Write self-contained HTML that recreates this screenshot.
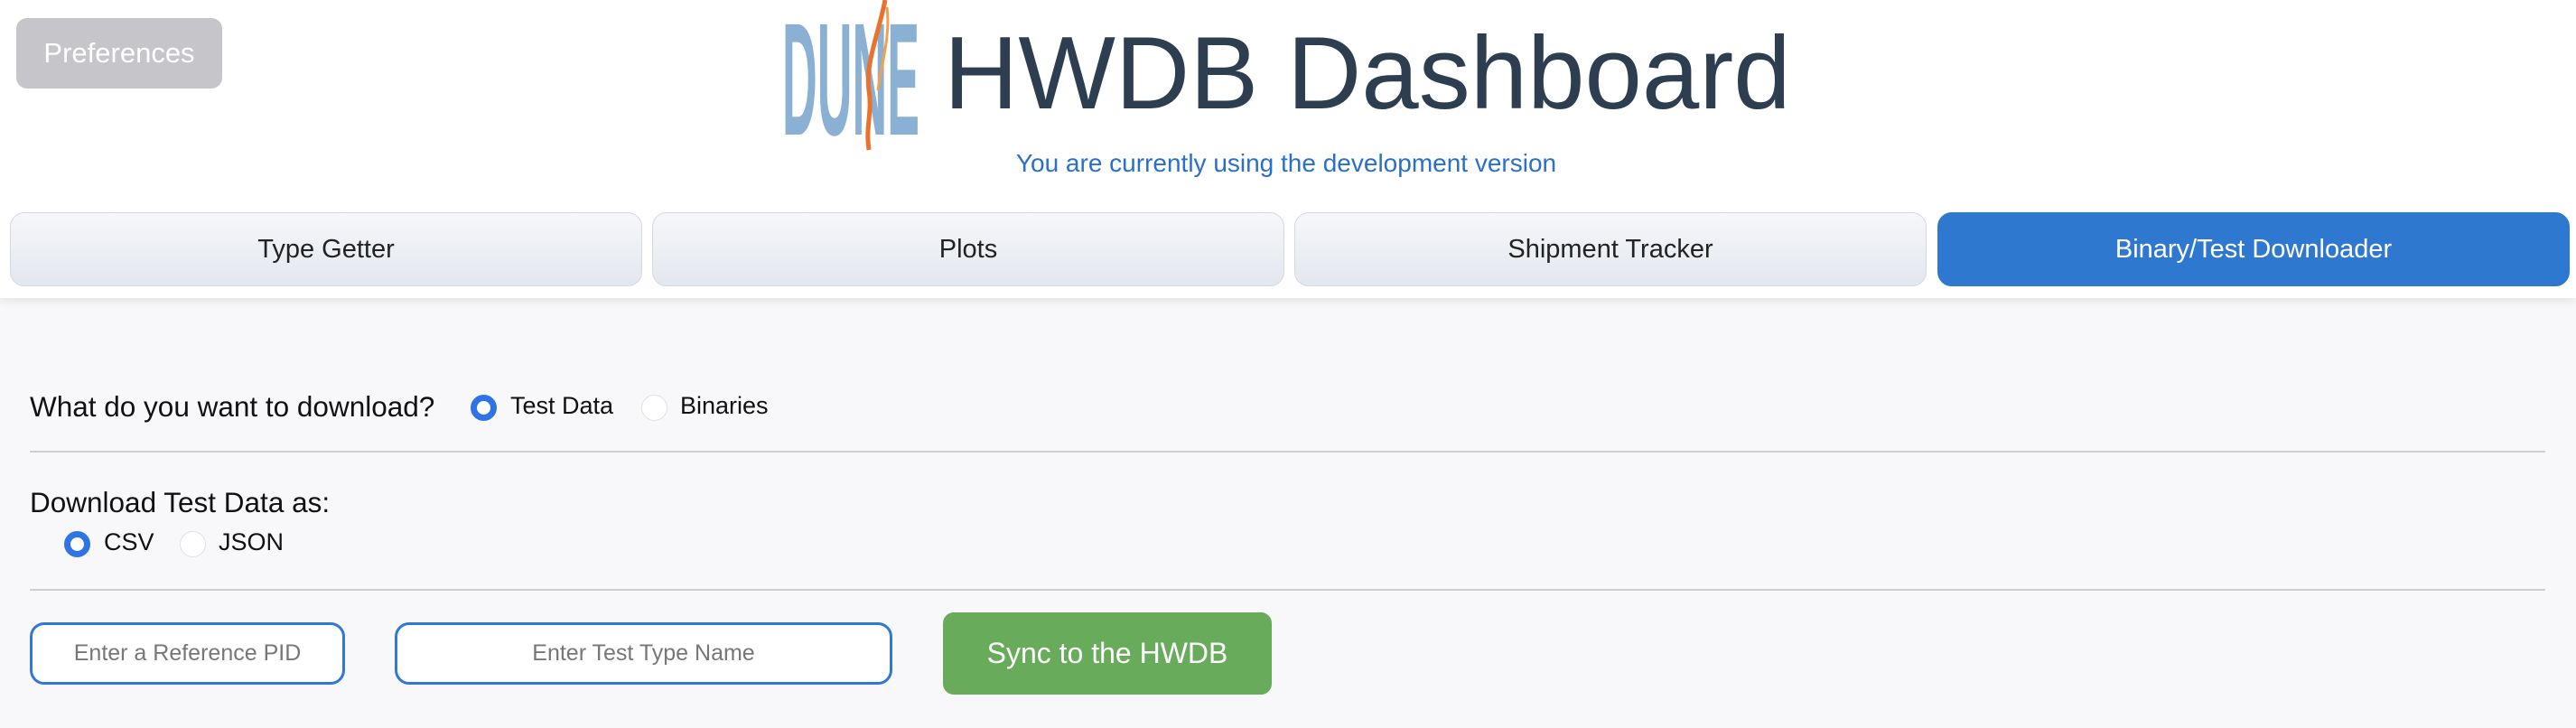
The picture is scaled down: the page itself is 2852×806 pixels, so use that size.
<!DOCTYPE html>
<html><head><meta charset="utf-8"><style>
*{box-sizing:border-box;margin:0;padding:0}
body{width:2852px;height:806px;overflow:hidden;background:#f8f8fa;font-family:"Liberation Sans",Arial,sans-serif;position:relative}
.hdr{position:absolute;left:0;top:0;width:2852px;height:330px;background:#fff;box-shadow:0 4px 10px rgba(0,0,0,0.08)}
.pref{position:absolute;left:18px;top:20px;width:228px;height:78px;background:#c6c5ca;border-radius:12px;color:#fff;font-size:31px;line-height:78px;text-align:center}
.title{position:absolute;left:1045px;top:12px;font-size:114px;color:#2c3e50;line-height:140px;white-space:nowrap}
.sub{position:absolute;left:0;width:2848px;top:165px;text-align:center;font-size:28px;color:#2a6fc9}
.tab{position:absolute;top:235px;height:82px;width:700px;border-radius:16px;border:1px solid #d5d8e0;background:linear-gradient(#f6f7fa,#e3e7ee);text-align:center;line-height:80px;font-size:29px;color:#222}
.tab.on{background:#2f78d0;border-color:#2f78d0;color:#fff}
.lbl{position:absolute;font-size:31.5px;color:#111;white-space:nowrap}
.opt{position:absolute;font-size:27px;color:#111;white-space:nowrap}
.r{position:absolute;width:29px;height:29px;border-radius:50%;background:#fff;border:1px solid #e2e2e6}
.r.on{border:7px solid #2e74e6}
.hr{position:absolute;left:33px;width:2785px;height:2px;background:#cfcfd3}
.in{position:absolute;top:689px;height:69px;border:3px solid #2f78d8;border-radius:16px;background:#fff;color:#777;font-size:25px;text-align:center;line-height:63px}
.btn{position:absolute;left:1044px;top:678px;width:364px;height:91px;background:#67ab5b;border-radius:12px;color:#fff;font-size:32px;text-align:center;line-height:91px}
</style></head><body>
<div class="hdr">
<div class="pref">Preferences</div>
<svg style="position:absolute;left:862px;top:0" width="170" height="170" viewBox="0 0 170 170">
<g transform="translate(4,149) scale(1,1.42)"><text x="0" y="0" font-family="Liberation Sans" font-weight="bold" font-size="125" fill="#8ab0d4" textLength="152" lengthAdjust="spacingAndGlyphs">DUNE</text></g>
<path d="M118 0 C110 40 96 70 100 100 C104 125 96 140 100 166" stroke="#e8722e" stroke-width="5" fill="none"/>
<path d="M120 8 C124 40 114 70 110 100" stroke="#f0a050" stroke-width="3" fill="none"/>
</svg>
<div class="title">HWDB Dashboard</div>
<div class="sub">You are currently using the development version</div>
<div class="tab" style="left:11px">Type Getter</div>
<div class="tab" style="left:722px">Plots</div>
<div class="tab" style="left:1433px">Shipment Tracker</div>
<div class="tab on" style="left:2145px">Binary/Test Downloader</div>
</div>
<div class="lbl" style="left:33px;top:432px">What do you want to download?</div>
<div class="r on" style="left:521px;top:437px"></div>
<div class="opt" style="left:565px;top:434px">Test Data</div>
<div class="r" style="left:710px;top:437px"></div>
<div class="opt" style="left:753px;top:434px">Binaries</div>
<div class="hr" style="top:499px"></div>
<div class="lbl" style="left:33px;top:538px">Download Test Data as:</div>
<div class="r on" style="left:71px;top:588px"></div>
<div class="opt" style="left:115px;top:585px">CSV</div>
<div class="r" style="left:199px;top:588px"></div>
<div class="opt" style="left:242px;top:585px">JSON</div>
<div class="hr" style="top:652px"></div>
<div class="in" style="left:33px;width:349px">Enter a Reference PID</div>
<div class="in" style="left:437px;width:551px">Enter Test Type Name</div>
<div class="btn">Sync to the HWDB</div>
</body></html>
